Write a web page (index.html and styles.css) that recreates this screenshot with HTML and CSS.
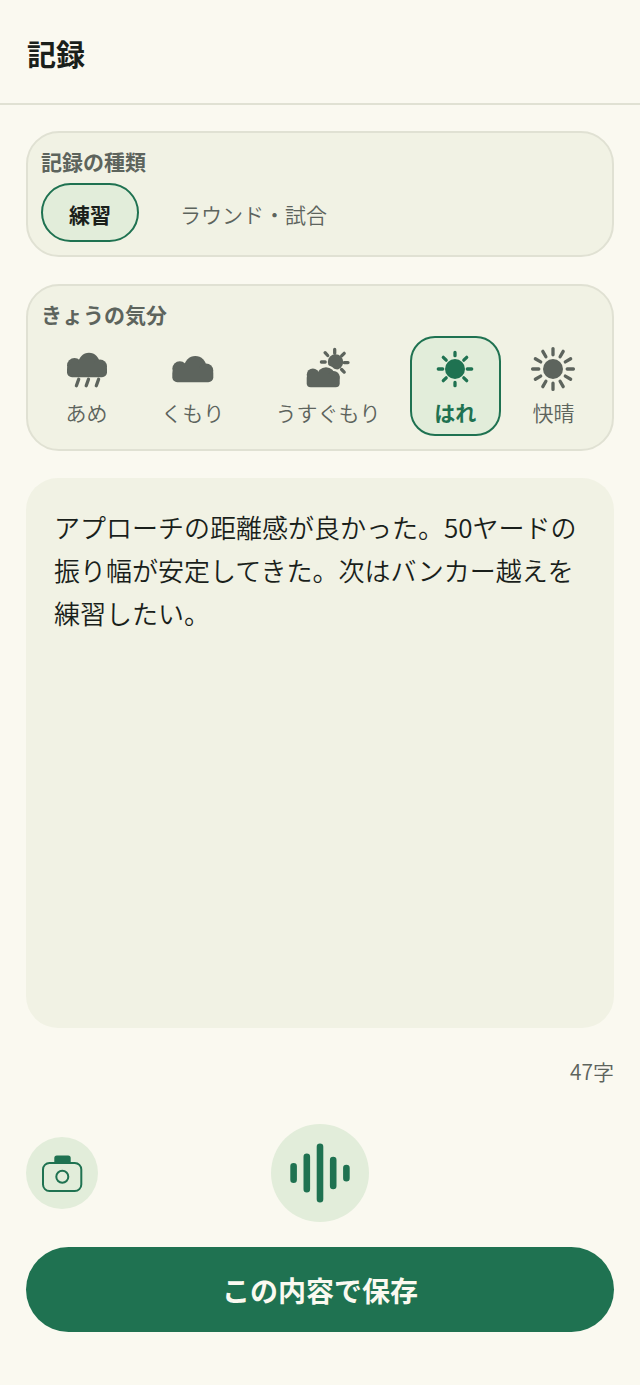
FILE: index.html
```html
<!DOCTYPE html>
<html lang="ja">
<head>
<meta charset="utf-8">
<meta name="viewport" content="width=device-width, initial-scale=1">
<title>記録</title>
<link rel="stylesheet" href="styles.css">
</head>
<body>
<header class="header"><h1 class="title">記録</h1></header>
<form class="form">
  <section class="card" role="radiogroup" aria-labelledby="kind-label">
    <h2 class="card-label" id="kind-label">記録の種類</h2>
    <div class="kinds">
      <label class="option kind"><input class="radio" type="radio" name="kind" checked><span>練習</span></label>
      <label class="option kind"><input class="radio" type="radio" name="kind"><span>ラウンド・試合</span></label>
    </div>
  </section>

  <section class="card" role="radiogroup" aria-labelledby="mood-label">
    <h2 class="card-label" id="mood-label">きょうの気分</h2>
    <div class="moods">
      <label class="option mood">
        <input class="radio" type="radio" name="mood">
        <svg class="mood-icon" viewBox="0 0 48 48" aria-hidden="true">
          <circle cx="11.5" cy="20.5" r="7.5"/><circle cx="26" cy="18.5" r="10.7"/><circle cx="37" cy="21.5" r="7"/>
          <rect x="4" y="19" width="40" height="13.3" rx="5"/>
          <path class="ray" d="M15.7 34.2l-2.3 6.6M25.5 34.2l-2.3 6.6M35.6 34.2l-2.3 6.6"/>
        </svg>
        <span>あめ</span>
      </label>
      <label class="option mood">
        <input class="radio" type="radio" name="mood">
        <svg class="mood-icon" viewBox="0 0 48 48" aria-hidden="true">
          <circle cx="10.8" cy="23.7" r="7.5"/><circle cx="26.3" cy="22" r="11"/><circle cx="37" cy="25.7" r="7.3"/>
          <rect x="3.3" y="23" width="41" height="14.3" rx="5"/>
        </svg>
        <span>くもり</span>
      </label>
      <label class="option mood">
        <input class="radio" type="radio" name="mood">
        <svg class="mood-icon" viewBox="0 0 48 48" aria-hidden="true">
          <circle cx="31.5" cy="17" r="7.7"/>
          <path class="ray" d="M30.7 4.5v3.8M17.4 17h3.8M40.2 17.6h3.8M21.1 7.7l2.6 2.8M40.2 8.3l-2.6 2.6M37.6 24.5l2.6 2.6"/>
          <path class="cloud-gap" d="M14 25Q22 17.5 29.5 24.5Q35 26 36 31"/>
          <circle cx="8.9" cy="29.7" r="6.2"/><circle cx="22" cy="31.2" r="9"/><circle cx="29.7" cy="32" r="6"/>
          <rect x="2.7" y="29" width="33" height="13.3" rx="4"/>
        </svg>
        <span>うすぐもり</span>
      </label>
      <label class="option mood">
        <input class="radio" type="radio" name="mood" checked>
        <svg class="mood-icon" viewBox="0 0 48 48" aria-hidden="true">
          <circle cx="24" cy="24" r="10"/>
          <path class="ray" d="M24 7.5v3.2M24 37.5v3.2M7.3 24h4.4M36.3 24h4.4M12.3 12.3l2.9 2.9M32.8 32.8l2.9 2.9M12.3 35.7l2.9-2.9M32.8 15.2l2.9-2.9"/>
        </svg>
        <span>はれ</span>
      </label>
      <label class="option mood">
        <input class="radio" type="radio" name="mood">
        <svg class="mood-icon" viewBox="0 0 48 48" aria-hidden="true">
          <circle cx="24" cy="24" r="10"/>
          <path class="ray" d="M24 3.6v6.2M24 38.2v6.2M3.6 24h6.2M38.2 24h6.2"/>
          <path class="ray" transform="rotate(30 24 24)" d="M24 3.6v6.2M24 38.2v6.2M3.6 24h6.2M38.2 24h6.2"/>
          <path class="ray" transform="rotate(60 24 24)" d="M24 3.6v6.2M24 38.2v6.2M3.6 24h6.2M38.2 24h6.2"/>
        </svg>
        <span>快晴</span>
      </label>
    </div>
  </section>

  <textarea class="note" aria-label="記録の内容">アプローチの距離感が良かった。50ヤードの振り幅が安定してきた。次はバンカー越えを練習したい。</textarea>
  <output class="count">47字</output>

  <div class="tools">
    <button class="round camera" type="button" aria-label="写真を追加">
      <svg class="camera-icon" viewBox="0 0 48 48" aria-hidden="true">
        <path class="solid" d="M16.3 14.5V9a2.5 2.5 0 0 1 2.5-2.5h11.4a2.5 2.5 0 0 1 2.5 2.5v5.5z"/>
        <rect class="line" x="5" y="14" width="38.3" height="28" rx="6.5"/>
        <circle class="line" cx="24.3" cy="27.8" r="6"/>
      </svg>
    </button>
    <button class="round voice" type="button" aria-label="音声で入力">
      <svg class="voice-icon" viewBox="0 0 64 64" aria-hidden="true">
        <path class="bars" d="M5.6 25.3v13.4M18.8 15.7v32.6M32 5.7v52.6M45.2 19v26M58.4 27v10.2"/>
      </svg>
    </button>
  </div>

  <button class="save" type="submit">この内容で保存</button>
</form>
</body>
</html>
```
FILE: styles.css
```css
* {
  box-sizing: border-box;
}

:root {
  --page: #faf9f0;
  --surface: #f1f2e4;
  --line: #e0e1d3;
  --tint: #e2edda;
  --green: #1f7251;
  --ink: #1a1f1b;
  --muted: #5d645d;
}

body {
  display: flex;
  flex-direction: column;
  min-height: 100vh;
  margin: 0;
  background: var(--page);
  color: var(--ink);
  font-family: "Noto Sans CJK JP", sans-serif;
  font-size: 21px;
  font-weight: 350;
  line-height: 32px;
}

.header {
  padding: 33px 27px 30px;
  border-bottom: 2px solid var(--line);
}

.title {
  margin: 0;
  font-size: 29px;
  font-weight: 700;
  line-height: 40px;
}

.form {
  display: flex;
  flex: 1;
  flex-direction: column;
  padding: 26px 26px 53px;
}

.card {
  margin-bottom: 27px;
  padding: 12px 13px 13px;
  border: 2px solid var(--line);
  border-radius: 33px;
  background: var(--surface);
}

.card-label {
  margin: 0 0 6px;
  color: var(--muted);
  font-size: 21px;
  font-weight: 700;
  line-height: 32px;
}

.kinds {
  display: flex;
  gap: 13px;
}

.moods {
  display: grid;
  grid-template-columns: 91fr 107fr 149fr 91fr 91fr;
  gap: 7px;
}

.option {
  position: relative;
  border: 2px solid transparent;
  color: var(--muted);
  cursor: pointer;
}

.radio {
  position: absolute;
  inset: 0;
  margin: 0;
  opacity: 0;
}

.option:has(.radio:checked) {
  border-color: var(--green);
  background: var(--tint);
  font-weight: 700;
}

.option:has(.radio:focus-visible) {
  outline: 2px solid var(--green);
  outline-offset: 2px;
}

.kind {
  padding: 13px 26px 10px;
  border-radius: 30px;
}

.kind:has(.radio:checked) {
  color: var(--ink);
}

.mood {
  display: flex;
  flex-direction: column;
  align-items: center;
  gap: 3px;
  padding: 7px 0 6px;
  border-radius: 25px;
  white-space: nowrap;
}

.mood:has(.radio:checked) {
  color: var(--green);
}

.mood-icon {
  width: 48px;
  height: 48px;
  fill: currentColor;
}

.ray {
  fill: none;
  stroke: currentColor;
  stroke-width: 3.3;
  stroke-linecap: round;
}

.cloud-gap {
  fill: none;
  stroke: var(--surface);
  stroke-width: 2;
}

.note {
  display: block;
  flex: 1;
  width: 100%;
  min-height: 200px;
  padding: 27px 28px;
  border: 0;
  border-radius: 32px;
  outline: 0;
  background: var(--surface);
  color: inherit;
  font: inherit;
  font-size: 26px;
  line-height: 43px;
  resize: none;
}

.count {
  margin: 27px 0 37px;
  color: var(--muted);
  text-align: right;
}

.tools {
  display: grid;
  grid-template-columns: 1fr auto 1fr;
  align-items: center;
  margin-bottom: 25px;
}

.round {
  display: grid;
  place-items: center;
  padding: 0;
  border: 0;
  border-radius: 50%;
  background: var(--tint);
  color: var(--green);
}

.camera {
  width: 72px;
  height: 72px;
}

.voice {
  width: 98px;
  height: 98px;
}

.camera-icon {
  width: 48px;
  height: 48px;
}

.voice-icon {
  width: 64px;
  height: 64px;
}

.solid {
  fill: currentColor;
}

.line {
  fill: none;
  stroke: currentColor;
  stroke-width: 2;
}

.bars {
  fill: none;
  stroke: currentColor;
  stroke-width: 6.6;
  stroke-linecap: round;
}

.save {
  padding: 23px 22px 21px;
  border: 0;
  border-radius: 43px;
  background: var(--green);
  color: var(--page);
  font: inherit;
  font-size: 28px;
  font-weight: 700;
  line-height: 41px;
}
```
